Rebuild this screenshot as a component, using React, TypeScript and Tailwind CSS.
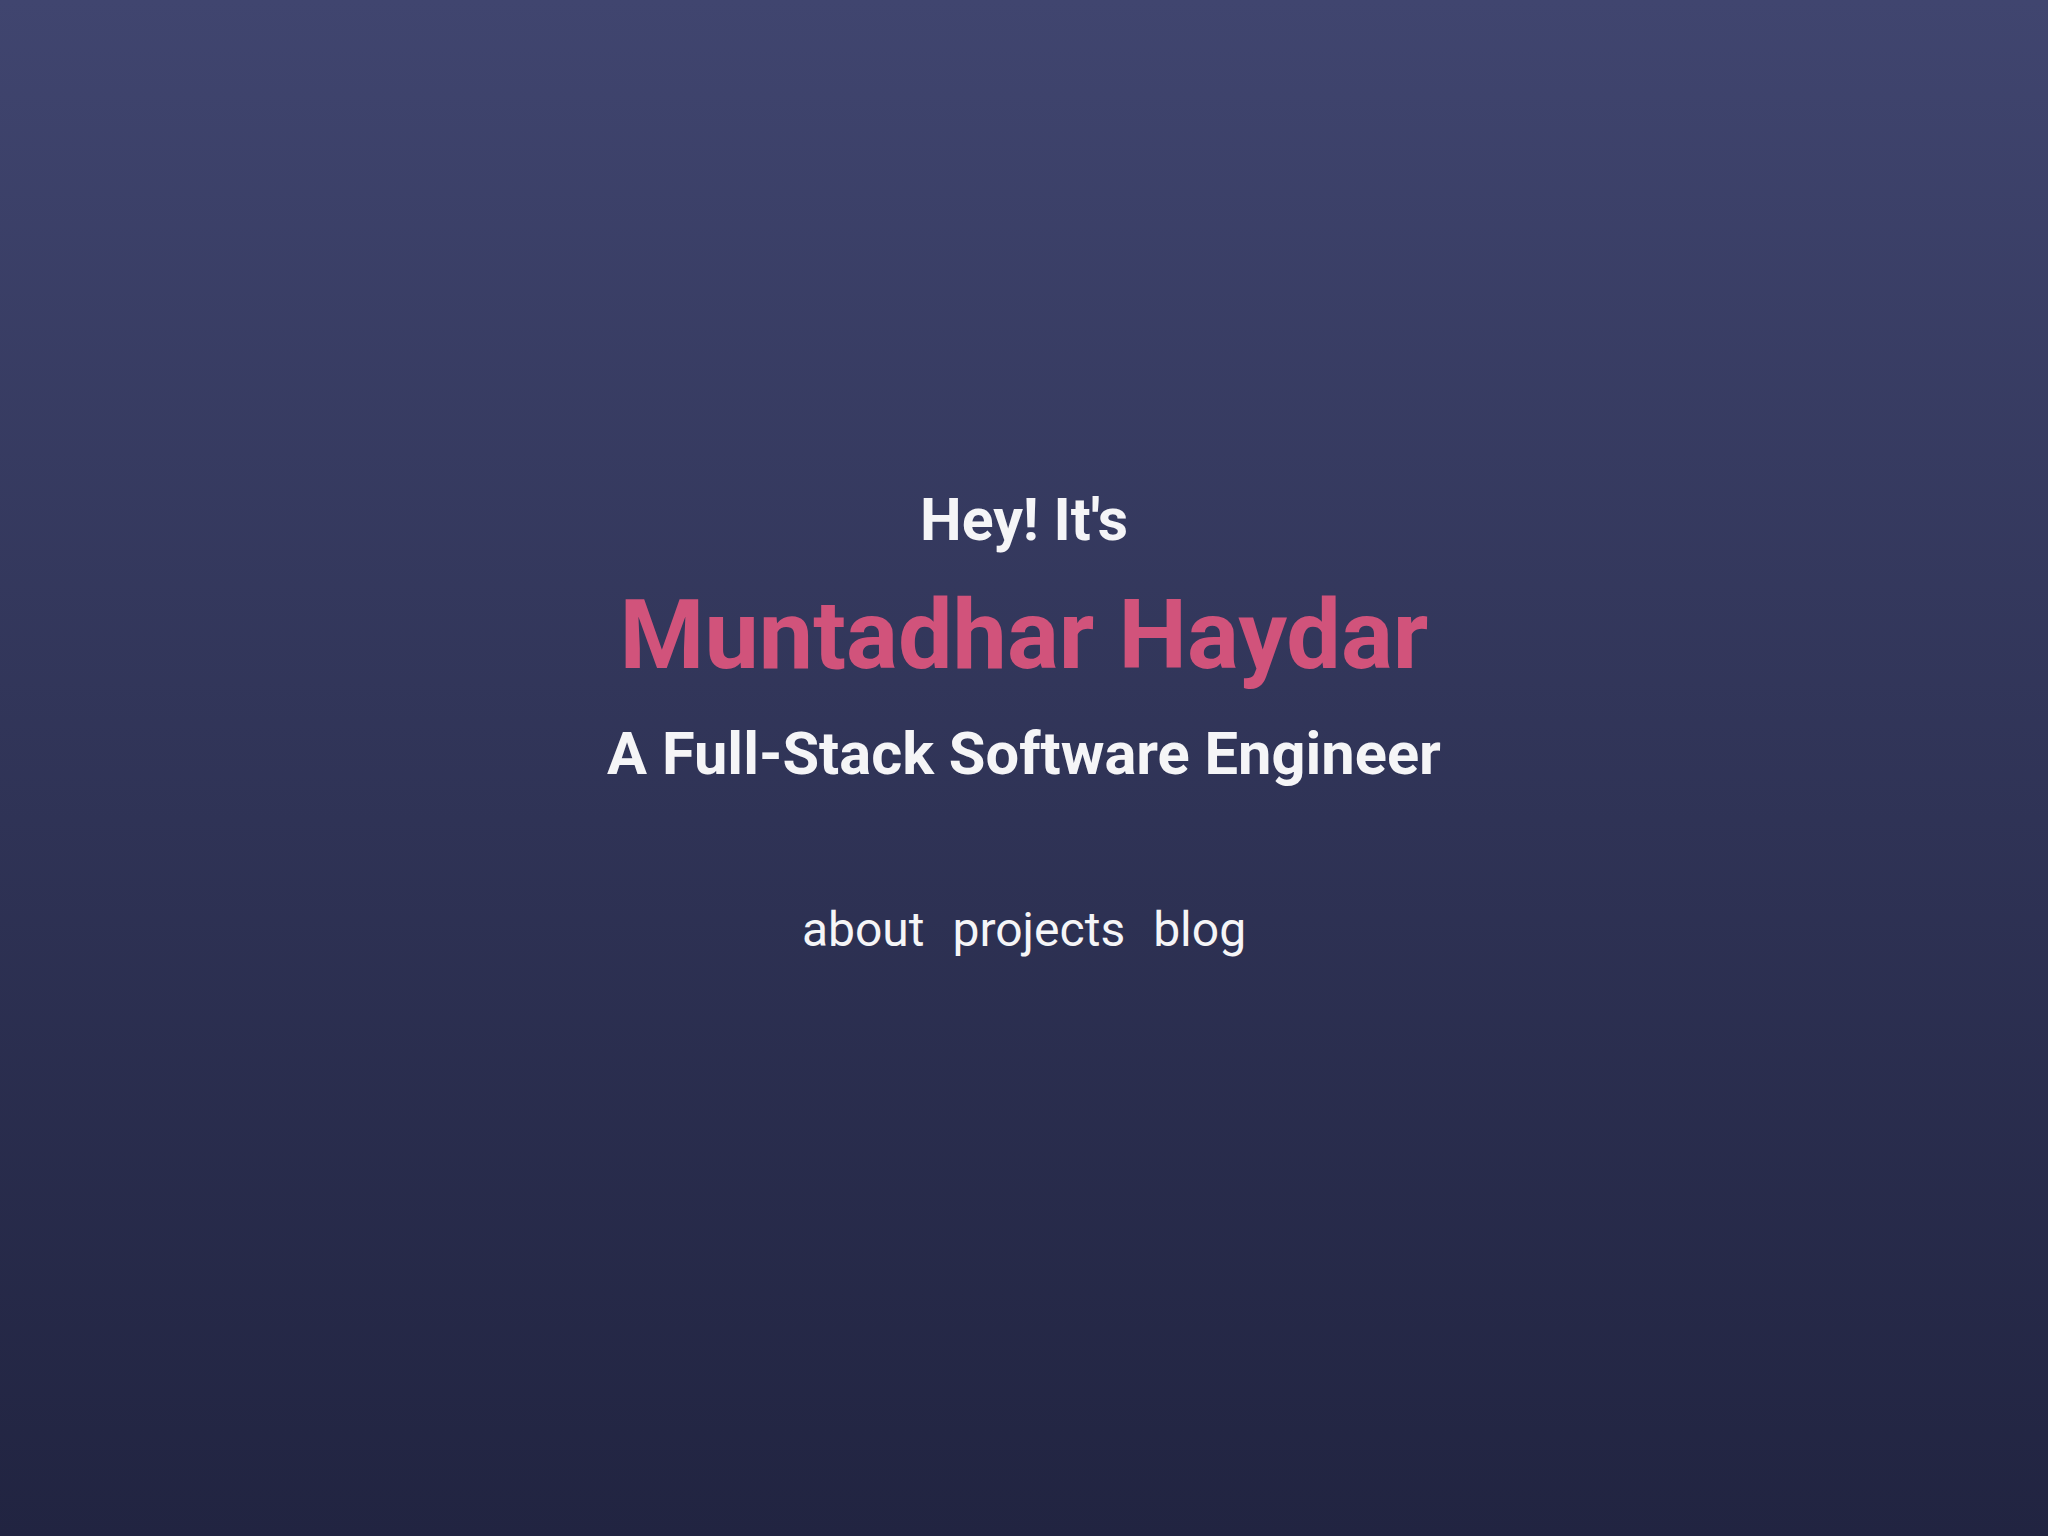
import React from "react";

export default function App() {
  return (
    <div
      className="min-h-screen w-full bg-gradient-to-b from-[#40456f] to-[#212441] flex flex-col items-center pt-[484px] text-[#f5f5f7]"
      style={{ fontFamily: "Roboto, 'Noto Sans', sans-serif" }}
    >
      <h2 className="text-[59px] leading-[72px] font-bold">Hey! It's</h2>
      <h1 className="mt-[23px] text-[97px] leading-[112px] font-bold text-[#d1537b]">
        Muntadhar Haydar
      </h1>
      <h3 className="mt-[27px] text-[59.6px] leading-[72px] font-bold">
        A Full-Stack Software Engineer
      </h3>
      <nav className="mt-[112px] flex gap-[28px] text-[48px] leading-[56px] font-normal">
        <a href="#about">about</a>
        <a href="#projects">projects</a>
        <a href="#blog">blog</a>
      </nav>
    </div>
  );
}
